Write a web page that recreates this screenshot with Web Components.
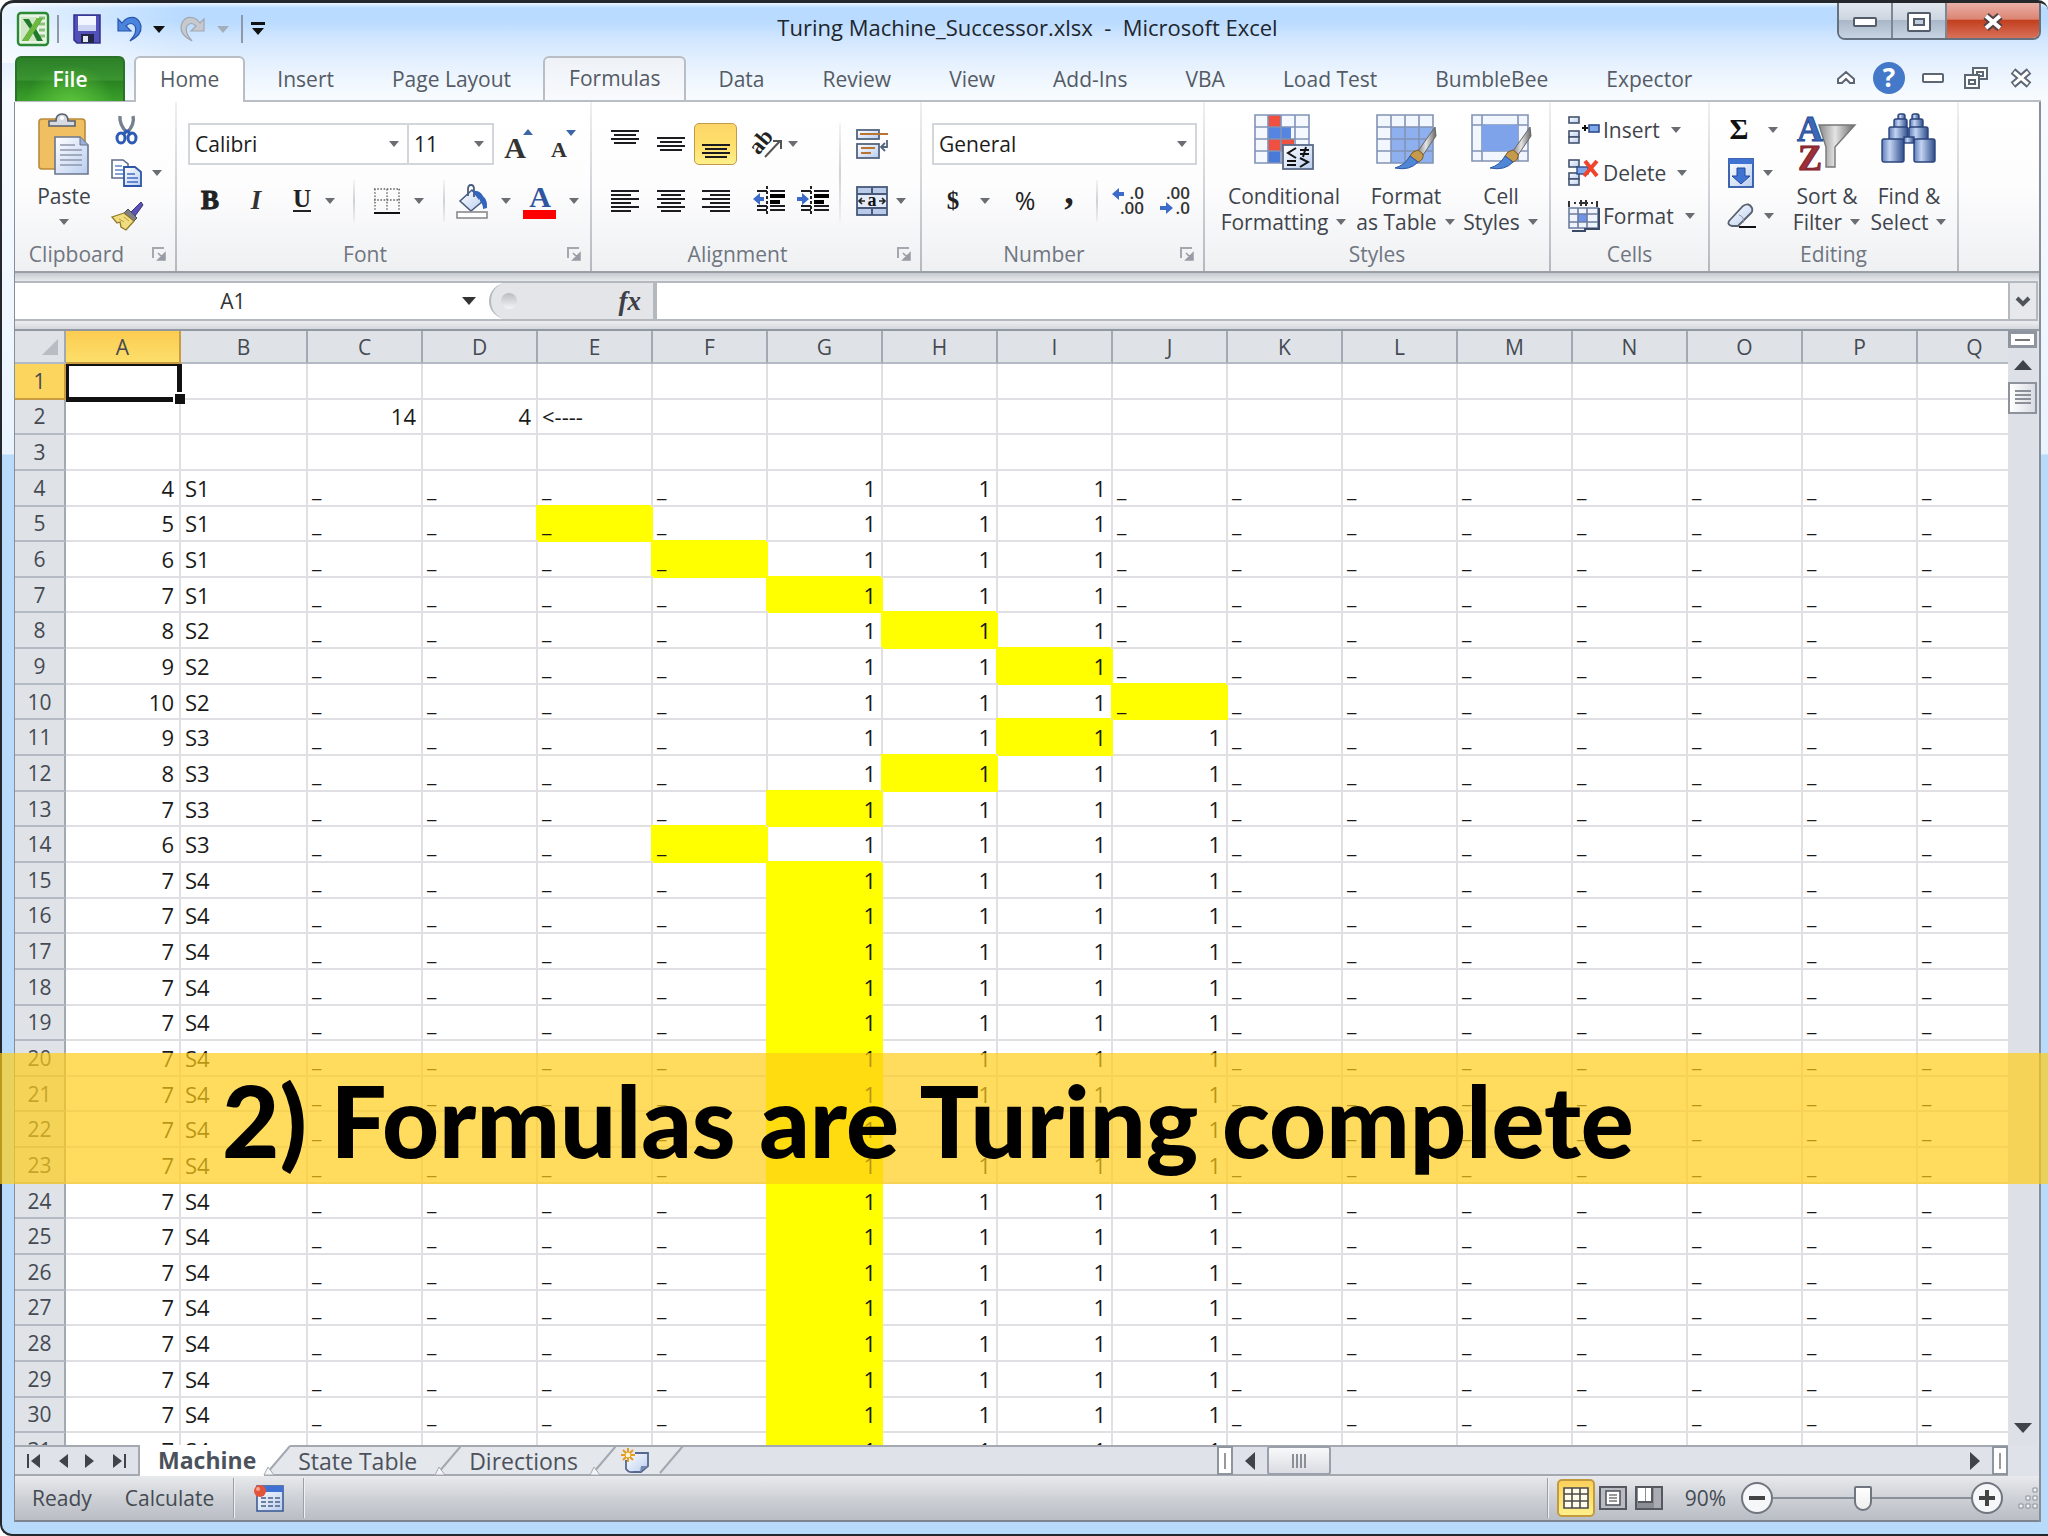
<!DOCTYPE html>
<html lang="en">
<head>
<meta charset="utf-8">
<title>Turing Machine_Successor.xlsx - Microsoft Excel</title>
<style>
html,body{margin:0;height:100%;overflow:hidden}
body{font-family:"Open Sans","Noto Sans",sans-serif;font-size:21px;line-height:26px;color:#444a52}
</style>
</head>
<body>
<app-window></app-window>
<script>
const RESET = `:host{box-sizing:border-box}*{box-sizing:border-box}
button,input,select{font:inherit;color:inherit;margin:0;padding:0;border:0;background:none;appearance:none;outline:0;border-radius:0}
button{display:flex;align-items:center;justify-content:center;white-space:nowrap}
svg{display:block;flex:none;overflow:visible}`;
const svg = (w, h, body) => `<svg width="${w}" height="${h}" viewBox="0 0 ${w} ${h}" aria-hidden="true">${body}</svg>`;
const lines = (list, w, color = '#1c1c20', h = 2) => list.map(([x, y, l]) => `<rect x="${x}" y="${y}" width="${l || w}" height="${h}" fill="${color}"/>`).join('');
const serif = (x, y, s, t, extra = '') => `<text x="${x}" y="${y}" font-family="Liberation Serif, serif" font-size="${s}" font-weight="700" text-anchor="middle" ${extra}>${t}</text>`;
const GRAD = `<defs><linearGradient id="b" x1="0" y1="0" x2="1" y2="1"><stop offset="0" stop-color="#fff"/><stop offset="1" stop-color="#b9cdf0"/></linearGradient>
<linearGradient id="d" x1="0" y1="0" x2="1" y2="0"><stop offset="0" stop-color="#5c7dbb"/><stop offset=".35" stop-color="#c3d4f2"/><stop offset="1" stop-color="#2d4c8c"/></linearGradient>
<linearGradient id="g" x1="0" y1="0" x2="1" y2="0"><stop offset="0" stop-color="#888"/><stop offset=".45" stop-color="#e4e4e4"/><stop offset="1" stop-color="#666"/></linearGradient></defs>`;
const gridLines = (x0, y0, x1, y1, xs, ys, c) => `<path d="M${x0} ${y0}H${x1}V${y1}H${x0}Z${xs.map(x => `M${x} ${y0}V${y1}`).join('')}${ys.map(y => `M${x0} ${y}H${x1}`).join('')}" fill="none" stroke="${c}" stroke-width="1.6"/>`;
const paintBrush = `<path d="M59 14 42 38l5 4L60 23Z" fill="url(#g)" stroke="#666"/><path d="M42 37q-6 1-8 6l8 6q6-2 5-8Z" fill="#c59a4c" stroke="#7d5a22"/><path d="M34 43q-5 9-15 12 15 3 23-6Z" fill="#4f86d6" stroke="#2d56a0"/>`;
const ICONS = {
  excel: svg(32, 34, `<rect x="1" y="1" width="30" height="32" rx="3" fill="#e9f5e4" stroke="#2d8a34" stroke-width="2.4"/><rect x="4" y="5" width="16" height="24" fill="#cfe6c4"/><path d="M22 6h6M22 12h6M22 18h6M22 24h6" stroke="#8cc07c" stroke-width="3"/><path d="M6 7h6l4 7 4-8h6l-7 11 7 12h-6l-4-8-5 8H5l8-12Z" fill="#207a2b"/><path d="M20 6h6L11 29H5Z" fill="#6cb93e"/>`),
  save: svg(28, 30, `<path d="M1 1h26v28H4l-3-3Z" fill="#5250b8" stroke="#33318a" stroke-width="1.5"/><rect x="5" y="2" width="18" height="15" fill="#f4f6ff"/><path d="M5 11h18v6H5Z" fill="#cdd5f3"/><rect x="8" y="20" width="13" height="9" fill="#222748"/><rect x="10" y="22" width="5" height="6" fill="#e8e8f4"/>`),
  undo: svg(26, 28, `<path d="M1 4v12h13L9 11q5-5 9 0 3 6-5 15 12-6 11-15Q21 0 11 3 8 4 5 8Z" fill="#4a84dc" stroke="#2a55ad" stroke-width="1.2"/>`),
  redo: svg(26, 28, `<path d="M25 4v12H12l5-5q-5-5-9 0-3 6 5 15Q1 20 2 11 5 0 15 3q3 1 6 5Z" fill="#c6c9cf" stroke="#a3a7ae" stroke-width="1.2"/>`),
  customize: svg(14, 14, `<path d="M0 0h14v3H0ZM1 6h12l-6 7Z" fill="#111"/>`),
  paste: svg(54, 62, GRAD + `<rect x="2" y="6" width="46" height="50" rx="3" fill="#f0bf62" stroke="#b98a3a" stroke-width="1.6"/><path d="M12 13V8h7q0-7 6-7t6 7h7v5Z" fill="#d6dae2" stroke="#5a616d" stroke-width="1.6"/><circle cx="25" cy="5" r="2" fill="#fff"/><path d="M18 24h25l8 8v29H18Z" fill="url(#b)" stroke="#69758c" stroke-width="1.6"/><path d="M43 24v8h8" fill="#9ab0d6" stroke="#69758c"/><path d="M23 32h15M23 37h22M23 42h22M23 47h22M23 52h22" stroke="#8e98ab" stroke-width="1.6"/>`),
  cut: svg(32, 30, `<path d="M9 1q-1 8 7 17M22 1q2 8-6 17" fill="none" stroke="#76808f" stroke-width="3.4"/><path d="M16 15l-4 5M16 15l4 5" stroke="#2d5bb5" stroke-width="3"/><ellipse cx="10" cy="23" rx="4" ry="5" fill="none" stroke="#2d5bb5" stroke-width="3"/><ellipse cx="21" cy="23" rx="4" ry="5" fill="none" stroke="#2d5bb5" stroke-width="3"/>`),
  copy: svg(32, 28, GRAD + `<path d="M1 1h11l5 4v14H1Z" fill="#fff" stroke="#5f6e8c" stroke-width="1.6"/><path d="M4 7h7M4 11h8M4 15h8" stroke="#5f85c9" stroke-width="1.5"/><path d="M13 8h11l6 5v14H13Z" fill="url(#b)" stroke="#2c56a8" stroke-width="1.8"/><path d="M16 15h8M16 19h11M16 23h11" stroke="#3f6cc4" stroke-width="1.5"/>`),
  brush: svg(32, 30, `<path d="M30 1 20 11l4 4 8-11Z" fill="#5a52b4" stroke="#38327c"/><path d="M17 8l9 9-3 3-10-8Z" fill="#7d8088" stroke="#4c4f56"/><path d="M13 12 1 16l5 6 3-1 1 5 5 3 8-9Z" fill="#f1dd7e" stroke="#8f7a2c" stroke-width="1.3"/><path d="m8 18 5 3M13 16l5 4" stroke="#b89f42"/>`),
  growA: svg(30, 30, serif(12, 29, 30, 'A', 'fill="#333"') + `<path d="M20 6h10l-5-6Z" fill="#3d66a8"/>`),
  shrinkA: svg(28, 30, serif(10, 28, 22, 'A', 'fill="#333"') + `<path d="M17 1h10l-5 6Z" fill="#3d66a8"/>`),
  bold: svg(20, 24, serif(10, 20, 27, 'B', 'fill="#222" stroke="#222"')),
  italic: svg(20, 24, serif(10, 20, 27, 'I', 'font-style="italic" fill="#333"')),
  underline: svg(20, 24, serif(10, 18, 25, 'U', 'fill="#222"') + `<rect x="1" y="21" width="18" height="2" fill="#222"/>`),
  borders: svg(28, 28, `<path d="M1 2H27M1 13H27M2 2V24M14 2V24M26 2V24" stroke="#666" stroke-width="1.4" stroke-dasharray="1.6 1.6" fill="none"/><rect x="1" y="25" width="26" height="2" fill="#111"/>`),
  bucket: svg(32, 34, GRAD + `<path d="M4 17 16 6l11 11-12 10Z" fill="url(#b)" stroke="#4a5b7e" stroke-width="1.6"/><path d="M12 12V5q0-4 3-4t3 4v8" fill="none" stroke="#4a5b7e" stroke-width="1.8"/><path d="M24 11q8 2 7 13l-4 1q0-5-3-8Z" fill="#3465bd"/><path d="M16 7q8-1 11 5l-4 4Z" fill="#3465bd"/><rect x="1" y="28" width="30" height="6" fill="#fff" stroke="#8a8a8a" stroke-width="1.6"/>`),
  fontColor: svg(33, 34, serif(17, 23, 30, 'A', 'fill="#2f55a0"') + `<rect y="26" width="33" height="9" fill="#f00"/>`),
  top: svg(28, 28, lines([[0, 0], [3, 4, 22], [0, 8], [3, 12, 22]], 28)),
  middle: svg(28, 28, lines([[0, 7], [3, 11, 22], [0, 15], [3, 19, 22]], 28)),
  bottom: svg(28, 28, lines([[0, 14], [3, 18, 22], [0, 22], [3, 26, 22]], 28)),
  left: svg(28, 22, lines([[0, 0], [0, 4, 20], [0, 8], [0, 12, 20], [0, 16], [0, 20, 20]], 28)),
  center: svg(28, 22, lines([[0, 0], [4, 4, 20], [0, 8], [4, 12, 20], [0, 16], [4, 20, 20]], 28)),
  right: svg(28, 22, lines([[0, 0], [8, 4, 20], [0, 8], [8, 12, 20], [0, 16], [8, 20, 20]], 28)),
  outdent: svg(32, 30, lines([[4, 4, 10], [17, 4, 15], [4, 19, 10], [17, 19, 15], [4, 23, 10], [17, 23, 15]]) + lines([[17, 8, 15], [17, 14, 10]], 1, '#000', 4) + `<path d="M14 0v30" stroke="#222" stroke-width="2" stroke-dasharray="3 2"/><path d="M0 13l7-6v4h4v4H7v4Z" fill="#3c6bc9"/>`),
  indent: svg(32, 30, lines([[4, 4, 10], [17, 4, 15], [4, 19, 10], [17, 19, 15], [4, 23, 10], [17, 23, 15]]) + lines([[17, 8, 15], [17, 14, 10]], 1, '#000', 4) + `<path d="M14 0v30" stroke="#222" stroke-width="2" stroke-dasharray="3 2"/><path d="M12 13 5 7v4H0v4h5v4Z" fill="#3c6bc9"/>`),
  orient: svg(30, 28, serif(10, 17, 23, 'ab', 'fill="#222" transform="rotate(-50 11 13)"') + `<path d="M12 27 27 11M20 11h8v8" fill="none" stroke="#555" stroke-width="2"/>`),
  wrap: svg(32, 30, GRAD + `<rect x="1" y="1" width="22" height="9" fill="url(#b)" stroke="#53647f" stroke-width="1.8"/><path d="M4 5h28" stroke="#b97332" stroke-width="2"/><rect x="1" y="15" width="22" height="14" fill="url(#b)" stroke="#53647f" stroke-width="1.8"/><path d="M5 19h14M5 24h10" stroke="#b97332" stroke-width="2"/><path d="M31 11v7h-5M29 14l-4 4 4 4" fill="none" stroke="#53647f" stroke-width="1.8"/>`),
  merge: svg(32, 30, GRAD + `<rect x="1" y="1" width="30" height="28" fill="#b9cbe8" stroke="#46597a" stroke-width="1.8"/><path d="M1 8h30M1 22h30M16 1v7M16 22v7" stroke="#46597a" stroke-width="2"/><rect x="2" y="9" width="28" height="12" fill="#e3ebf8"/><path d="M3 15h6M6 12l-3 3 3 3M29 15h-6M26 12l3 3-3 3" fill="none" stroke="#222" stroke-width="1.6"/>` + serif(16, 20, 18, 'a', 'fill="#111"')),
  dollar: svg(16, 24, serif(8, 20, 25, '$', 'fill="#222"')),
  percent: svg(24, 24, `<text x="12" y="21" font-family="Open Sans, sans-serif" font-size="25" text-anchor="middle" fill="#222">%</text>`),
  comma: svg(12, 24, serif(6, 15, 38, ',', 'fill="#222"')),
  incDec: svg(32, 30, `<g font-family="Open Sans, sans-serif" font-size="17" font-weight="600" fill="#333" text-anchor="end"><text x="32" y="13">.0</text><text x="32" y="28">.00</text></g><path d="M0 8l7-6v4h5v4H7v4Z" fill="#3c6bc9"/>`),
  decDec: svg(32, 30, `<g font-family="Open Sans, sans-serif" font-size="17" font-weight="600" fill="#333" text-anchor="end"><text x="32" y="13">.00</text><text x="32" y="28">.0</text></g><path d="M15 22l-7-6v4H2v4h6v4Z" fill="#3c6bc9"/>`),
  conditional: svg(60, 58, GRAD + `<rect x="1" y="2" width="54" height="48" fill="#f5f8ff"/><rect x="14" y="2" width="13" height="12" fill="#f0503f"/><rect x="14" y="14" width="23" height="12" fill="#5585e0"/><rect x="14" y="26" width="26" height="12" fill="#f0503f"/><rect x="14" y="38" width="12" height="12" fill="#4a7ad8"/>` + gridLines(1, 2, 55, 50, [14, 27, 41], [14, 26, 38], '#7f92b8') + `<rect x="29" y="32" width="30" height="24" fill="url(#b)" stroke="#5b6a88" stroke-width="1.8"/><path d="M42 35l-8 5 8 5M33 48h9M33 52h9M46 37h9M46 41h9M52 34l-3 10M46 45l8 4-8 5" fill="none" stroke="#111" stroke-width="2"/>`),
  table: svg(60, 58, GRAD + `<rect x="1" y="2" width="56" height="48" fill="#f2f6ff"/><rect x="15" y="14" width="42" height="36" fill="#8fb0ee"/>` + gridLines(1, 2, 57, 50, [15, 29, 43], [14, 26, 38], '#8393b5') + paintBrush),
  cellStyle: svg(60, 58, GRAD + `<rect x="1" y="2" width="56" height="46" fill="#f2f6ff"/>` + gridLines(1, 2, 57, 48, [11, 47], [12, 38], '#8393b5') + `<rect x="11" y="12" width="36" height="26" fill="#7fa3ea"/>` + paintBrush),
  insertCells: svg(32, 28, GRAD + `<g fill="url(#b)" stroke="#44536f" stroke-width="1.6"><rect x="1" y="1" width="10" height="6"/><rect x="1" y="15" width="10" height="6"/><rect x="1" y="21" width="10" height="6"/></g><rect x="21" y="9" width="10" height="7" fill="#7fa8ea" stroke="#2d4c8c" stroke-width="1.6"/><path d="M14 12h6M17 9v6" stroke="#111" stroke-width="2"/>`),
  deleteCells: svg(32, 28, GRAD + `<g fill="url(#b)" stroke="#44536f" stroke-width="1.6"><rect x="1" y="1" width="10" height="7"/><rect x="1" y="14" width="10" height="6"/><rect x="1" y="20" width="10" height="6"/></g><rect x="9" y="8" width="11" height="7" fill="#7fa8ea" stroke="#2d4c8c" stroke-width="1.4"/><path d="M17 2 29 17M29 2 16 17" stroke="#f0452c" stroke-width="4"/>`),
  formatCells: svg(32, 32, `<path d="M1 1v6M29 1v6M6 3h2M11 3h9M23 3h2M13 0v6M18 0v6" stroke="#333" stroke-width="2"/><rect x="1" y="8" width="29" height="21" fill="#eef3fd"/><rect x="10" y="14" width="9" height="8" fill="#6f93e8"/>` + gridLines(1, 8, 30, 28, [10, 19], [14, 22], '#6c7c9b') + `<path d="M31 8v21H17v2H4" fill="none" stroke="#3a4a66" stroke-width="2"/>`),
  sum: svg(24, 24, serif(12, 21, 29, 'Σ', 'fill="#111"')),
  fill: svg(26, 30, GRAD + `<rect x="1" y="1" width="24" height="28" fill="url(#b)" stroke="#2d56a8" stroke-width="1.8"/><rect x="1" y="1" width="24" height="5" fill="#3f72d2"/><path d="M9 10h8v8h5l-9 8-9-8h5Z" fill="#3f72d2" stroke="#23489a"/>`),
  eraser: svg(30, 26, GRAD + `<path d="M2 18 16 3q6-4 9 2 1 3-1 5L11 23H5q-5-1-3-5Z" fill="url(#b)" stroke="#59606e" stroke-width="1.8"/><path d="M12 12q6 2 4 8" fill="none" stroke="#8c93a3"/><path d="M12 24h17" stroke="#111" stroke-width="2"/>`),
  sort: svg(60, 60, GRAD + `<path d="M22 12H58L38 34V54H29V34Z" fill="url(#g)" stroke="#777" stroke-width="1.4"/>` + serif(13, 28, 36, 'A', 'fill="#3d68b8" stroke="#274c94"') + serif(13, 57, 36, 'Z', 'fill="#9c3038" stroke="#7c2028"')),
  find: svg(56, 50, GRAD + `<g fill="url(#d)" stroke="#2b447a" stroke-width="1.4"><rect x="17" y="1" width="7" height="6" rx="2"/><rect x="31" y="1" width="7" height="6" rx="2"/><rect x="13" y="6" width="13" height="9" rx="2"/><rect x="29" y="6" width="13" height="9" rx="2"/><rect x="8" y="14" width="19" height="13" rx="2"/><rect x="28" y="14" width="19" height="13" rx="2"/><rect x="1" y="26" width="22" height="23" rx="2"/><rect x="33" y="26" width="21" height="23" rx="2"/><rect x="23" y="24" width="10" height="6"/></g>`),
  launcher: svg(14, 14, `<path d="M1 11V1h11" fill="none" stroke="#a4a8ae" stroke-width="2"/><path d="M6 6l5 5M13 6v7H6Z" fill="#989ca4" stroke="#989ca4" stroke-width="1.5"/>`),
  arrow: svg(12, 6, `<path d="M1 0h10L6 6Z" fill="#6a6d72"/>`),
  macro: svg(30, 28, GRAD + `<rect x="3" y="2" width="26" height="25" fill="url(#b)" stroke="#3e5c96" stroke-width="1.6"/><rect x="3" y="2" width="26" height="6" fill="#3f70d4"/><path d="M7 14h5M14 14h5M21 14h5M7 18h5M14 18h5M21 18h5M7 22h5M14 22h5M21 22h5" stroke="#6c7f9f" stroke-width="2"/><circle cx="6" cy="7" r="6" fill="#e2553a"/><circle cx="4" cy="5" r="2" fill="#f6a48f"/>`),
  newSheet: svg(30, 26, GRAD + `<path d="M6 12V21q3 4 7 3h8l7-6V5H15" fill="url(#b)" stroke="#55688f" stroke-width="1.8"/><path d="M20 24l1-6h7Z" fill="#7388ae"/><path d="M8 0v14M1 7h14M3 2l10 10M13 2 3 12" stroke="#e69a1e" stroke-width="2"/><circle cx="8" cy="7" r="3" fill="#fff4c4" stroke="#e69a1e"/>`),
  normalView: svg(26, 22, `<rect x="1" y="1" width="24" height="20" fill="#fffbe8"/>` + gridLines(1, 1, 25, 21, [9, 17], [7, 14], '#4a4a4a')),
  pageView: svg(28, 24, `<rect x="1" y="1" width="26" height="22" fill="#b9bcc2" stroke="#55585e" stroke-width="2"/><rect x="7" y="5" width="14" height="14" fill="#fff" stroke="#55585e" stroke-width="1.6"/><path d="M10 9h8M10 12h8M10 15h8" stroke="#777" stroke-width="1.4"/>`),
  breakView: svg(28, 24, `<rect x="1" y="1" width="26" height="22" fill="#8b8e94" stroke="#55585e" stroke-width="2"/><path d="M3 2h7v13H3ZM11 2h6v13h-6Z" fill="#fff"/><path d="M17 2v14H3" fill="none" stroke="#55585e" stroke-width="2"/><path d="M19 2h7v20h-7Z" fill="#a9acb2"/>`),
};
function define(name, css, html) {
  customElements.define(name, class extends HTMLElement {
    constructor() { super(); this.attachShadow({ mode: 'open' }); }
    connectedCallback() {
      this.shadowRoot.innerHTML = `<style>${RESET}${css}</style>` + (typeof html === 'function' ? html(this) : html);
    }
  });
}
const attr = (el, n, d = '') => el.getAttribute(n) || d;

/* small ribbon button: icon, optional label, optional menu arrow */
define('tool-button', `:host{display:block}
button{width:var(--w,100%);height:100%;gap:var(--gap,12px);border:1px solid transparent;border-radius:5px}
:host([pressed]) button{background:linear-gradient(#fcd668,#ffdf6c 50%,#fff08a);border-color:#c09a4a}
:host([start]) button{justify-content:flex-start}
.t{color:#3f444c;margin-left:-7px}`,
  el => `<button aria-label="${attr(el, 'name')}">${ICONS[attr(el, 'icon')]}${attr(el, 'label') ? `<span class="t">${attr(el, 'label')}</span>` : ''}${el.hasAttribute('menu') ? ICONS.arrow : ''}</button>`);

/* large ribbon button: picture over two text lines */
define('big-button', `:host{display:block}
button{width:var(--w);height:100%;flex-direction:column;justify-content:flex-start;color:#3f444c}
.i{height:75px;display:flex;align-items:flex-start;padding-top:5px}
.l{display:flex;height:26px;align-items:center;gap:7px}`,
  el => `<button><span class="i">${ICONS[attr(el, 'icon')]}</span><span class="l">${attr(el, 'one')}</span><span class="l">${attr(el, 'two') ? `<span>${attr(el, 'two')}</span>` : ''}${ICONS.arrow}</span></button>`);

define('combo-box', `:host{display:grid;width:var(--w);height:42px;border:2px solid #d2d5d9;background:#fff}
select{grid-area:1/1;padding-left:5px;color:#1c1c1c;width:100%}
svg{grid-area:1/1;justify-self:end;align-self:center;margin-right:7px;pointer-events:none}`,
  el => `<select aria-label="${attr(el, 'name')}"><option>${attr(el, 'value')}</option></select>${ICONS.arrow}`);

define('ribbon-group', `:host{display:flex;flex-direction:column;width:var(--w);border-right:2px solid #c9ccd1;border-image:linear-gradient(#eef0f2,#b4b8be) 1}
.c{height:137px;padding-top:6px;display:flex}
.f{height:34px;display:flex;align-items:center;color:#6f7681}
.f span{flex:1;text-align:center}
:host([launcher]) .f span{padding-right:14px}
.f button{margin-right:9px}`,
  el => `<div class="c"><slot></slot></div><div class="f"><span>${attr(el, 'label')}</span>${el.hasAttribute('launcher') ? `<button aria-label="More ${attr(el, 'label')}">${ICONS.launcher}</button>` : ''}</div>`);

define('title-bar', `:host{display:grid;grid-template-columns:1fr auto 1fr;height:53px}
.q{display:flex;align-items:center;padding-left:3px;height:52px}
.s{width:2px;height:28px;background:#8d99a8;margin:0 14px 0 8px}
.t{font-size:22px;color:#20262e;align-self:center;padding-bottom:6px}
.w{justify-self:end;display:flex;height:37px;border:2px solid #66717f;border-top:0;border-radius:0 0 8px 8px;overflow:hidden}
.w button{width:54px;padding-top:2px;background:linear-gradient(#e2e7ee,#ccd5e0 48%,#a9b7c8 50%,#c6d3e2);border-right:2px solid #7c8794}
.w button:last-child{width:92px;border:0;background:linear-gradient(#e9b0a6,#dc8573 46%,#c2401f 50%,#d9705a)}`,
  `<div class="q">${ICONS.excel}<i class="s"></i>
  <button aria-label="Save">${ICONS.save}</button>
  <button aria-label="Undo" style="margin-left:16px;gap:10px">${ICONS.undo}${svg(12, 7, '<path d="M0 0h12L6 7Z" fill="#111"/>')}</button>
  <button aria-label="Redo" style="margin-left:14px;gap:12px">${ICONS.redo}${svg(12, 7, '<path d="M0 0h12L6 7Z" fill="#a4aebb"/>')}</button>
  <i class="s" style="margin:0 8px 0 12px"></i><button aria-label="Customize toolbar">${ICONS.customize}</button></div>
  <div class="t">Turing Machine_Successor.xlsx&nbsp; -&nbsp; Microsoft Excel</div>
  <div class="w"><button aria-label="Minimize">${svg(24, 10, '<rect x="1" y="1" width="22" height="8" rx="1" fill="#fff" stroke="#545d6b" stroke-width="2"/>')}</button>
  <button aria-label="Maximize">${svg(24, 20, '<rect x="1" y="1" width="22" height="18" rx="1" fill="#fff" stroke="#545d6b" stroke-width="2"/><rect x="7" y="7" width="10" height="6" fill="#c3cedc" stroke="#545d6b" stroke-width="2"/>')}</button>
  <button aria-label="Close">${svg(22, 18, '<path d="M4 3l14 12M18 3 4 15" stroke="#54414a" stroke-width="8"/><path d="M4 3l14 12M18 3 4 15" stroke="#fff" stroke-width="4"/>')}</button></div>`);
ICONS.x = svg(22, 18, '<path d="M3 2l16 14M19 2 3 16" stroke="#5d6673" stroke-width="7"/><path d="M4 3l14 12M18 3 4 15" stroke="#fff" stroke-width="3"/>');

define('ribbon-tabs', `:host{display:flex;height:46px;align-items:stretch;border-bottom:2px solid #b9bec5;margin-left:1px}
nav{display:flex;gap:6px}
button{padding:0 24px 2px;border:2px solid transparent;border-bottom:0;border-radius:6px 6px 0 0;height:46px;color:#545b65}
.file{background:radial-gradient(ellipse at 50% 110%,#5cc43c,transparent 60%),linear-gradient(#2c8028,#3a9430 50%,#2a8322 55%,#3aa02a);color:#fff;width:110px;border-color:#2a7228;font-weight:600;margin-right:3px;height:45px}
.home{background:#fff;border-color:#b9bec5}
.hov{background:linear-gradient(#eef2f7,#f8fafd);border-color:#b9bec5;height:44px}
.r{margin-left:auto;display:flex;align-items:center;margin-right:9px}
.r button{padding:0;border:0}`,
  `<nav><button class="file">File</button><button class="home">Home</button><button>Insert</button><button>Page Layout</button><button class="hov">Formulas</button><button>Data</button><button>Review</button><button>View</button><button>Add-Ins</button><button>VBA</button><button>Load Test</button><button>BumbleBee</button><button>Expector</button></nav>
  <div class="r"><button aria-label="Collapse ribbon">${svg(20, 16, '<path d="M2 9l8-7 8 7v4h-4l-4-4-4 4H2Z" fill="#fff" stroke="#5d6673" stroke-width="2"/>')}</button>
  <button aria-label="Help" style="margin-left:17px">${svg(32, 32, '<circle cx="16" cy="16" r="16" fill="#4478c8"/><text x="16" y="25" font-size="26" font-weight="700" font-family="Open Sans, sans-serif" fill="#fff" text-anchor="middle">?</text>')}</button>
  <button aria-label="Minimize workbook" style="margin-left:17px">${svg(22, 10, '<rect x="1" y="1" width="20" height="8" rx="1" fill="#fff" stroke="#5d6673" stroke-width="2"/>')}</button>
  <button aria-label="Restore workbook" style="margin-left:20px">${svg(24, 22, '<path d="M9 1h14v11H9Z" fill="#fff" stroke="#5d6673" stroke-width="2"/><path d="M13 5h6v4h-6Z" fill="#fff" stroke="#5d6673" stroke-width="2"/><path d="M1 8h14v13H1Z" fill="#fff" stroke="#5d6673" stroke-width="2"/><path d="M5 13h6v4H5Z" fill="none" stroke="#5d6673" stroke-width="2"/>')}</button>
  <button aria-label="Close workbook" style="margin-left:22px">${ICONS.x}</button></div>`);

const tb = (icon, w, extra = '', more = '') => `<tool-button icon="${icon}" name="${icon}" style="--w:${w}px;${more}" ${extra}></tool-button>`;
define('office-ribbon', `:host{display:flex;height:171px;background:linear-gradient(#fff,#fdfdfe 50%,#eff0f2);border-bottom:2px solid #9a9fa6}
ribbon-group{flex:none}
.rows{display:flex;flex-direction:column;gap:15px;padding-top:15px}
.row{display:flex;height:42px}
.col{display:grid;grid-template-rows:repeat(3,43px)}
.s{width:2px;background:linear-gradient(#f4f4f5,#cfd1d5 50%,#f0f0f2);margin:0 4px}
.tall{margin-top:15px;height:99px}`,
  `<ribbon-group label="Clipboard" launcher style="--w:162px"><big-button icon="paste" one="Paste" style="--w:92px;margin-left:3px"></big-button>
    <div class="col">${tb('cut', 60, 'start')}${tb('copy', 60, 'start menu', '--gap:8px')}${tb('brush', 60, 'start')}</div></ribbon-group>
  <ribbon-group label="Font" launcher style="--w:415px"><div class="rows">
    <div class="row" style="padding-left:11px"><combo-box name="Font" value="Calibri" style="--w:221px"></combo-box><combo-box name="Font size" value="11" style="--w:87px;margin:0 1px 0 -2px"></combo-box>${tb('growA', 46)}${tb('shrinkA', 44)}</div>
    <div class="row" style="padding-left:10px">${tb('bold', 46)}${tb('italic', 46)}${tb('underline', 70, 'menu')}<i class="s"></i>${tb('borders', 80, 'menu')}<i class="s"></i>${tb('bucket', 70, 'menu')}${tb('fontColor', 65, 'menu')}</div></div></ribbon-group>
  <ribbon-group label="Alignment" launcher style="--w:330px"><div class="rows" style="padding-left:10px">
    <div class="row">${tb('top', 46)}${tb('middle', 46)}${tb('bottom', 43, 'pressed')}${tb('orient', 58, 'menu', 'margin-left:10px;--gap:4px')}</div>
    <div class="row">${tb('left', 46)}${tb('center', 46)}${tb('right', 43)}${tb('outdent', 44, '', 'margin-left:10px')}${tb('indent', 44)}</div></div>
    <i class="s tall"></i><div class="rows" style="padding-left:2px"><div class="row">${tb('wrap', 50)}</div><div class="row">${tb('merge', 69, 'menu', '--gap:7px')}</div></div></ribbon-group>
  <ribbon-group label="Number" launcher style="--w:283px"><div class="rows" style="padding-left:10px">
    <div class="row"><combo-box name="Number format" value="General" style="--w:265px"></combo-box></div>
    <div class="row">${tb('dollar', 72, 'menu', '--gap:18px')}${tb('percent', 42)}${tb('comma', 46)}<i class="s"></i>${tb('incDec', 52)}${tb('decDec', 40)}</div></div></ribbon-group>
  <ribbon-group label="Styles" style="--w:346px"><big-button icon="conditional" one="Conditional" two="Formatting" style="--w:142px;margin-left:8px"></big-button><big-button icon="table" one="Format" two="as Table" style="--w:102px"></big-button><big-button icon="cellStyle" one="Cell" two="Styles" style="--w:88px"></big-button></ribbon-group>
  <ribbon-group label="Cells" style="--w:159px"><div class="col" style="padding-left:16px">${tb('insertCells', 140, 'start menu label="Insert"', '--gap:10px')}${tb('deleteCells', 140, 'start menu label="Delete"', '--gap:10px')}${tb('formatCells', 140, 'start menu label="Format"', '--gap:10px')}</div></ribbon-group>
  <ribbon-group label="Editing" style="--w:249px"><div class="col" style="padding-left:8px">${tb('sum', 70, 'menu', '--gap:16px')}${tb('fill', 66, 'menu', '--gap:8px')}${tb('eraser', 66, 'menu', '--gap:6px')}</div><big-button icon="sort" one="Sort &amp;" two="Filter" style="--w:78px"></big-button><big-button icon="find" one="Find &amp;" two="Select" style="--w:86px"></big-button></ribbon-group>`);

define('formula-bar', `:host{display:flex;height:58px;padding:8px 0;background:linear-gradient(#c6cad0,#e8eaed 8px,#e8eaed 50px,#d4d7dc);border-bottom:2px solid #9298a1}
.n{display:flex;flex:none;width:642px;border:2px solid #b4b9c0;border-left:0;background:#fff}
.n input{width:436px;text-align:center;color:#333}
.n button{width:36px}
.fx{flex:1;margin-left:2px;border-radius:22px 0 0 22px;border:2px solid #b4b9c0;border-width:0 2px;background:#e3e5e8;display:flex;justify-content:space-between;align-items:center;padding:0 12px 0 10px;color:#3c4046;font:italic 700 27px "Liberation Serif",serif}
.k{width:16px;height:16px;border-radius:50%;background:linear-gradient(#b9bcc1,#f4f5f6)}
.v{flex:1;min-width:0;background:#fff;border:solid #b4b9c0;border-width:2px 0}
.e{width:30px;border:2px solid #b4b9c0;margin-right:1px;background:#e6e8ec}`,
  `<div class="n"><input aria-label="Name box" value="A1"><button aria-label="Name list">${svg(14, 8, '<path d="M0 0h14L7 8Z" fill="#333"/>')}</button><span class="fx"><i class="k"></i><span>fx</span></span></div>
  <input class="v" aria-label="Formula"><button class="e" aria-label="Expand formula bar">${svg(14, 11, '<path d="M1 2l6 6 6-6" fill="none" stroke="#50555c" stroke-width="4"/>')}</button>`);

/* worksheet: machine tape, one step per row */
const COLS = 'ABCDEFGHIJKLMNOPQ'.split('');
const STATES = { 4: [4, 'S1'], 5: [5, 'S1'], 6: [6, 'S1'], 7: [7, 'S1'], 8: [8, 'S2'], 9: [9, 'S2'], 10: [10, 'S2'], 11: [9, 'S3'], 12: [8, 'S3'], 13: [7, 'S3'], 14: [6, 'S3'] };
const HEAD = { 5: 'E', 6: 'F', 7: 'G', 8: 'H', 9: 'I', 10: 'J', 11: 'I', 12: 'H', 13: 'G', 14: 'F' };
function cellValue(r, c) {
  if (r === 2) return { C: '14', D: '4', E: '&lt;----' }[c] || '';
  if (r < 4) return '';
  const [pos, st] = STATES[r] || [7, 'S4'];
  if (c === 'A') return pos;
  if (c === 'B') return st;
  if ('GHI'.includes(c) || (c === 'J' && r > 10)) return '1';
  return '_';
}
function sheetRows() {
  let out = '';
  for (let r = 1; r <= 31; r++) {
    out += `<tr><th scope="row"${r === 1 ? ' class="on"' : ''}>${r}</th>` + COLS.map(c => {
      const v = cellValue(r, c), num = v !== '' && !isNaN(v);
      const y = (HEAD[r] || (r > 14 ? 'G' : '')) === c;
      const cls = [num && 'num', v === '_' && 'u', y && 'y', r === 1 && c === 'A' && 'sel'].filter(Boolean).join(' ');
      return `<td${cls ? ` class="${cls}"` : ''}>${v}</td>`;
    }).join('') + '</tr>';
  }
  return out;
}
define('work-sheet', `:host{display:flex;flex:1;min-height:0;background:#dfe2e8}
.g{flex:1;min-width:0;overflow:hidden;background:#fff}
table{table-layout:fixed;border-collapse:separate;border-spacing:0;width:2018px;height:1138px}
th,td{padding:0 2px;line-height:30px;overflow:hidden}
thead tr{height:33px}
th{font-weight:400;color:#454a52;background:#dfe3e8;border:solid #a3a9b2;border-width:0 2px 2px 0;border-bottom-color:#b4bac3;text-align:center}
th.on{background:linear-gradient(#fbcc51,#fddf6a);border-color:#c99c42}
tbody th.on{background:#fcd55f}
td{border:solid #e0dfe4;border-width:0 2px 2px 0;color:#1a1a1a;font-size:22px;padding-left:4px}
td.num{text-align:right;padding-right:5px}
td.u{font-weight:600}
td.y{background:#ff0;border-color:#ff0;box-shadow:-2px -2px 0 #ff0}
td.sel{overflow:visible;position:relative}
td.sel::before{content:"";position:absolute;inset:0 -3px -4px 0;border:3px solid #111;border-width:2px 5px 5px 3px}
td.sel::after{content:"";position:absolute;right:-6px;bottom:-6px;width:10px;height:10px;background:#111;border:solid #fff;border-width:2px 0 0 2px}
.v{width:29px;margin-right:2px;display:flex;flex-direction:column;align-items:center;background:#dde0e7}
.sp{width:29px;height:17px;background:#fff;border:3px solid #8f959e}
.sp::before{content:"";width:15px;height:2px;background:#777}
.up{height:34px}
.th{width:29px;height:32px;border:2px solid #8d939d;background:linear-gradient(90deg,#fff,#d8dbe2)}
.dn{margin-top:auto;height:34px}`,
  () => `<div class="g"><table aria-label="Machine"><colgroup><col style="width:51px"><col style="width:115px"><col style="width:127px">${'<col style="width:115px">'.repeat(15)}</colgroup>
  <thead><tr><th>${svg(16, 16, '<path d="M16 0v16H0Z" fill="#b8bcc3"/>').replace('<svg', '<svg style="margin-left:25px"')}</th>${COLS.map(c => `<th scope="col"${c === 'A' ? ' class="on"' : ''}>${c}</th>`).join('')}</tr></thead><tbody>${sheetRows()}</tbody></table></div>
  <div class="v"><button class="sp" aria-label="Split"></button><button class="up" aria-label="Scroll up">${svg(18, 10, '<path d="M0 10h18L9 0Z" fill="#3f434a"/>')}</button>
  <button class="th" aria-label="Scroll position">${svg(16, 16, lines([[0, 0], [0, 4], [0, 8], [0, 12]], 16, '#8a8f98'))}</button>
  <button class="dn" aria-label="Scroll down">${svg(18, 10, '<path d="M0 0h18L9 10Z" fill="#3f434a"/>')}</button></div>`);

define('sheet-tab', `:host{display:flex;flex:none}
button{background:var(--bg);border:solid #a4a9b1;border-width:var(--top,2px) 0 2px;padding:0 var(--pr) 0 var(--pl);font-size:23px;color:#4c525b}
:host([active]) button{font-weight:700;border-bottom-color:#fff}
svg{flex:none}`,
  el => {
    const a = el.hasAttribute('active'), last = el.hasAttribute('last');
    el.style.setProperty('--bg', a ? '#fff' : '#e4e7ec');
    if (a) el.style.setProperty('--top', '0');
    return `<button><slot></slot></button>${svg(26, 31, `<path d="M0 ${a ? 0 : 1}H26L2 29H0Z" fill="${a ? '#fff' : '#e4e7ec'}"/>${last ? '' : '<path d="M26 1V30H2Z" fill="#e4e7ec"/>'}<path d="M26 1 3 28M0 30H26${a ? '' : 'M0 1H26'}" fill="none" stroke="#a4a9b1" stroke-width="2"/>${last ? '' : '<path d="M4 22l6 8H0Z" fill="#f4f5f7" stroke="#a4a9b1"/>'}`)}`;
  });

define('sheet-footer', `:host{display:flex;height:31px;background:#dfe2e8;flex:none}
.nav{display:flex;width:125px;justify-content:space-between;padding:0 12px;border:solid #a4a9b1;border-width:2px 2px 2px 0}
.fill{flex:1;border:solid #a4a9b1;border-width:2px 0;max-width:534px}
.h{flex:1;min-width:0;display:flex;align-items:center;border:solid #a4a9b1;border-width:2px 0}
.sp{width:16px;height:29px;border:2px solid #8f959e;background:#fff}
.sp::before{content:"";width:2px;height:16px;background:#999}
.ar{width:34px;height:27px}
.th{width:64px;height:29px;border:2px solid #9a9fa8;border-radius:3px;background:linear-gradient(#f8f9fa,#d9dce2)}
.c{width:31px}`,
  `<div class="nav"><button aria-label="First sheet">${svg(14, 14, '<path d="M1 0v14" stroke="#3f434a" stroke-width="2"/><path d="M13 0v14L4 7Z" fill="#3f434a"/>')}</button><button aria-label="Previous sheet">${svg(9, 14, '<path d="M9 0v14L0 7Z" fill="#3f434a"/>')}</button><button aria-label="Next sheet">${svg(9, 14, '<path d="M0 0v14l9-7Z" fill="#3f434a"/>')}</button><button aria-label="Last sheet">${svg(14, 14, '<path d="M13 0v14" stroke="#3f434a" stroke-width="2"/><path d="M1 0v14l9-7Z" fill="#3f434a"/>')}</button></div>
  <sheet-tab active style="--pl:18px;--pr:8px">Machine</sheet-tab><sheet-tab style="--pl:8px;--pr:18px">State Table</sheet-tab><sheet-tab style="--pl:8px;--pr:12px">Directions</sheet-tab><sheet-tab last style="--pl:4px;--pr:7px">${ICONS.newSheet}</sheet-tab>
  <div class="fill"></div><div class="h"><button class="sp" aria-label="Resize tabs"></button><button class="ar" aria-label="Scroll left">${svg(10, 18, '<path d="M10 0v18L0 9Z" fill="#3f434a"/>')}</button><button class="th" aria-label="Horizontal scroll position">${svg(14, 14, '<path d="M1 0v14M5 0v14M9 0v14M13 0v14" stroke="#8a8f98" stroke-width="2"/>')}</button><button class="ar" style="margin-left:auto" aria-label="Scroll right">${svg(10, 18, '<path d="M0 0v18l10-9Z" fill="#3f434a"/>')}</button><button class="sp" aria-label="Split columns"></button></div><div class="c"></div>`);

define('status-bar', `:host{display:flex;height:46px;flex:none;align-items:center;background:linear-gradient(#e8eaed,#d0d3d8 45%,#b9bdc4);border-bottom:2px solid #7f858e;color:#444a52;padding-left:17px}
.s{width:2px;height:40px;background:#9aa0a8;border-right:1px solid #f0f0f0}
.m{margin:0 19px}
.r{margin-left:auto;display:flex;align-items:center}
.on{width:38px;height:38px;border:2px solid #c39a3e;border-radius:5px;background:linear-gradient(#fbd15c,#fff08a);margin-left:8px}
input{width:198px;height:34px;background:linear-gradient(#8a9099,#8a9099) center/100% 2px no-repeat}
input::-webkit-slider-thumb{appearance:none;width:18px;height:25px;background:linear-gradient(#fff,#eee) 0 0;border:2px solid #70767f;border-radius:2px 2px 9px 9px}`,
  `<span>Ready</span><span style="margin-left:33px">Calculate</span><i class="s" style="margin-left:19px"></i><button class="m" aria-label="Record macro">${ICONS.macro}</button><i class="s"></i>
  <div class="r"><i class="s"></i><button class="on" aria-label="Normal view">${ICONS.normalView}</button><button style="margin-left:4px" aria-label="Page layout view">${ICONS.pageView}</button><button style="margin-left:8px" aria-label="Page break preview">${ICONS.breakView}</button>
  <span style="margin:0 15px 0 22px">90%</span>
  <button aria-label="Zoom out">${svg(32, 32, '<circle cx="16" cy="16" r="15" fill="#f6f7f8" stroke="#70767f" stroke-width="2"/><path d="M8 16h16" stroke="#444" stroke-width="4"/>')}</button><input type="range" aria-label="Zoom" min="0" max="100" value="45"><button aria-label="Zoom in">${svg(32, 32, '<circle cx="16" cy="16" r="15" fill="#f6f7f8" stroke="#70767f" stroke-width="2"/><path d="M8 16h16M16 8v16" stroke="#444" stroke-width="4"/>')}</button>
  ${svg(24, 24, '<path d="M18 2h4v4h-4ZM11 10h4v4h-4ZM18 10h4v4h-4ZM4 18h4v4H4ZM11 18h4v4h-4ZM18 18h4v4h-4Z" fill="#f2f3f5" stroke="#8a9099"/>').replace('<svg', '<svg style="margin-left:12px"')}</div>`);

define('caption-banner', `:host{display:block;position:absolute;left:-2px;right:0;top:1050px;height:131px;padding:0 222px;background:rgba(255,204,22,.69);color:#000;font:900 99px/134px Lato,sans-serif;white-space:nowrap}`, `<slot></slot>`);

define('app-window', `:host{display:flex;flex-direction:column;position:relative;height:100vh;border:solid #24282d;border-width:3px 0 2px 2px;border-radius:14px 10px 0 12px;padding:0 7px 12px 12px;
background:linear-gradient(90deg,rgba(255,255,255,.7),rgba(255,255,255,0) 180px) 0 0/100% 60px no-repeat,linear-gradient(#eaf4ff 0,#b9dbff 5px,#b9dbff 18px,#cfe5ff 34px,#e4f0fe 58px,#f7fbff 92px,#f2f8ff 230px,#e9f3fe 451px,#b9dbfb 452px)}
.c{flex:1;min-height:0;display:flex;flex-direction:column;border:solid #878e98;border-width:0 2px 0 1px}`,
  `<title-bar></title-bar><ribbon-tabs></ribbon-tabs><div class="c"><office-ribbon></office-ribbon><formula-bar></formula-bar><work-sheet></work-sheet><sheet-footer></sheet-footer><status-bar></status-bar></div><caption-banner>2) Formulas are Turing complete</caption-banner>`);
</script>
</body>
</html>
